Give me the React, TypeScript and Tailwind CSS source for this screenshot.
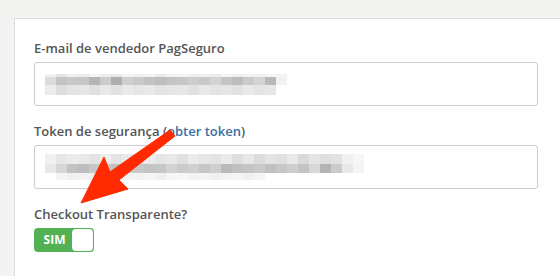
import type { FC } from "react";

// blurred (pixelated) value inside the inputs
const emailRows: string[][] = [
  ["bg-[#f2f2f2]", "bg-[#e4e4e4]", "bg-[#f0f0f0]", "bg-[#ececec]", "bg-[#f4f4f4]", "bg-[#eeeeee]", "bg-[#e8e8e8]", "bg-[#f4f4f4]", "bg-[#efefef]", "bg-[#f3f3f3]", "bg-[#eaeaea]", "bg-[#f2f2f2]", "bg-[#f5f5f5]", "bg-[#efefef]", "bg-[#f0f0f0]", "bg-[#ebebeb]", "bg-[#f4f4f4]", "bg-[#eeeeee]", "bg-[#f3f3f3]", "bg-[#f0f0f0]", "bg-[#f6f6f6]", "bg-[#f3f3f3]"],
  ["bg-[#dcdcdc]", "bg-[#c4c4c4]", "bg-[#c8c8c8]", "bg-[#c6c6c6]", "bg-[#b5b5b5]", "bg-[#cccccc]", "bg-[#aeaeae]", "bg-[#cfcfcf]", "bg-[#c9c9c9]", "bg-[#c2c2c2]", "bg-[#bebebe]", "bg-[#c3c3c3]", "bg-[#c7c7c7]", "bg-[#cdcdcd]", "bg-[#c8c8c8]", "bg-[#d3d3d3]", "bg-[#c5c5c5]", "bg-[#bdbdbd]", "bg-[#cacaca]", "bg-[#d5d5d5]", "bg-[#b9b9b9]", "bg-[#f2f2f2]"],
  ["bg-[#ececec]", "bg-[#dedede]", "bg-[#e4e4e4]", "bg-[#e6e6e6]", "bg-[#e0e0e0]", "bg-[#e8e8e8]", "bg-[#e2e2e2]", "bg-[#eaeaea]", "bg-[#e6e6e6]", "bg-[#e9e9e9]", "bg-[#e3e3e3]", "bg-[#e5e5e5]", "bg-[#e7e7e7]", "bg-[#e1e1e1]", "bg-[#e8e8e8]", "bg-[#e4e4e4]", "bg-[#e6e6e6]", "bg-[#e2e2e2]", "bg-[#e9e9e9]", "bg-[#e4e4e4]", "bg-[#e7e7e7]", "bg-[#ffffff]"],
];

const tokenRows: string[][] = [
  ["bg-[#f0f0f0]", "bg-[#e6e6e6]", "bg-[#ebebeb]", "bg-[#e9e9e9]", "bg-[#e3e3e3]", "bg-[#eeeeee]", "bg-[#e4e4e4]", "bg-[#e9e9e9]", "bg-[#e2e2e2]", "bg-[#ececec]", "bg-[#e5e5e5]", "bg-[#e8e8e8]", "bg-[#e1e1e1]", "bg-[#ebebeb]", "bg-[#e6e6e6]", "bg-[#e3e3e3]", "bg-[#eaeaea]", "bg-[#dedede]", "bg-[#e7e7e7]", "bg-[#dcdcdc]", "bg-[#e4e4e4]", "bg-[#e0e0e0]", "bg-[#e9e9e9]", "bg-[#dadada]", "bg-[#e5e5e5]", "bg-[#dedede]", "bg-[#e2e2e2]", "bg-[#f0f0f0]", "bg-[#f6f6f6]", "bg-[#ffffff]"],
  ["bg-[#e8e8e8]", "bg-[#d6d6d6]", "bg-[#c2c2c2]", "bg-[#bdbdbd]", "bg-[#c6c6c6]", "bg-[#cacaca]", "bg-[#c0c0c0]", "bg-[#cccccc]", "bg-[#c8c8c8]", "bg-[#c4c4c4]", "bg-[#c6c6c6]", "bg-[#d2d2d2]", "bg-[#cbcbcb]", "bg-[#d0d0d0]", "bg-[#c6c6c6]", "bg-[#cfcfcf]", "bg-[#bababa]", "bg-[#c1c1c1]", "bg-[#c5c5c5]", "bg-[#c9c9c9]", "bg-[#c0c0c0]", "bg-[#c7c7c7]", "bg-[#cecece]", "bg-[#c3c3c3]", "bg-[#d8d8d8]", "bg-[#b4b4b4]", "bg-[#cbcbcb]", "bg-[#e8e8e8]", "bg-[#f4f4f4]", "bg-[#ffffff]"],
  ["bg-[#ffffff]", "bg-[#f4f4f4]", "bg-[#f0f0f0]", "bg-[#f3f3f3]", "bg-[#efefef]", "bg-[#f5f5f5]", "bg-[#f1f1f1]", "bg-[#f4f4f4]", "bg-[#f2f2f2]", "bg-[#f6f6f6]", "bg-[#f0f0f0]", "bg-[#f5f5f5]", "bg-[#f7f7f7]", "bg-[#f2f2f2]", "bg-[#f4f4f4]", "bg-[#f0f0f0]", "bg-[#f3f3f3]", "bg-[#f6f6f6]", "bg-[#f1f1f1]", "bg-[#f5f5f5]", "bg-[#ffffff]", "bg-[#ffffff]", "bg-[#ffffff]", "bg-[#ffffff]", "bg-[#ffffff]", "bg-[#ffffff]", "bg-[#ffffff]", "bg-[#ffffff]", "bg-[#ffffff]", "bg-[#ffffff]"],
];

const Blurred: FC<{ rows: string[][]; rowHeights: string[] }> = ({ rows, rowHeights }) => (
  <div className="flex flex-col">
    {rows.map((row, i) => (
      <div key={i} className={`flex ${rowHeights[i]}`}>
        {row.map((cls, j) => (
          <div key={j} className={`w-[11px] ${cls}`} />
        ))}
      </div>
    ))}
  </div>
);

const Field: FC<{ children: React.ReactNode }> = ({ children }) => (
  <div className="mt-1 flex h-[44px] w-[504px] items-center rounded-[3px] border border-[#cccccc] bg-white pl-[10px]">
    {children}
  </div>
);

const App: FC = () => {
  return (
    <div
      className="relative h-[276px] w-[560px] overflow-hidden bg-[#f3f3f2] pt-[18px] pl-[14px]"
      style={{ fontFamily: '"Open Sans", "Liberation Sans", sans-serif' }}
    >
      <div className="h-[300px] w-[600px] border border-[#dcdcdc] bg-white pt-[19px] pl-[19px]">
        <label className="block text-[13px] leading-[20px] font-semibold text-[#555555]">
          E-mail de vendedor PagSeguro
        </label>
        <Field>
          <Blurred rows={emailRows} rowHeights={["h-[3px]", "h-[8px]", "h-[10px]"]} />
        </Field>

        <label className="mt-[15px] block text-[13px] leading-[20px] font-semibold text-[#555555]">
          Token de segurança (<a className="text-[#3c6ea4]">obter token</a>)
        </label>
        <Field>
          <Blurred rows={tokenRows} rowHeights={["h-[10px]", "h-[9px]", "h-[7px]"]} />
        </Field>

        <label className="mt-[15px] block text-[13px] leading-[20px] font-semibold text-[#555555]">
          Checkout Transparente?
        </label>
        <div className="mt-1 flex h-[24px] w-[60px] items-center rounded-[4px] bg-[#52b152] p-[1px]">
          <span className="flex-1 pl-[2px] text-center text-[12px] font-bold text-white">SIM</span>
          <span className="h-[22px] w-[21px] rounded-[4px] bg-white" />
        </div>
      </div>

      {/* red annotation arrow */}
      <svg className="absolute top-0 left-0" width="560" height="276" viewBox="0 0 560 276">
        <polygon
          points="81,203 104,157 110,172 170,130 175,136 119,180 128,189"
          fill="#ff2a00"
          stroke="#ff2a00"
          strokeLinejoin="round"
          strokeWidth="1"
        />
      </svg>
    </div>
  );
};

export default App;
